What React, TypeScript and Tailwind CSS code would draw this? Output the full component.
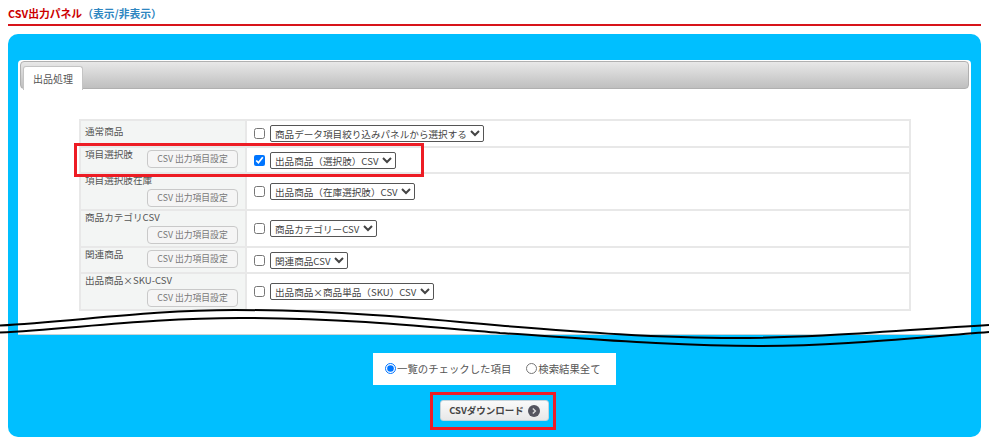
import React from 'react';

const rows = [
  { label: '通常商品', option: '商品データ項目絞り込みパネルから選択する', h: 'h-[27px]', noBtn: true },
  { label: '項目選択肢', option: '出品商品（選択肢）CSV', h: 'h-[26px]', checked: true },
  { label: '項目選択肢在庫', option: '出品商品（在庫選択肢）CSV', h: 'h-[37px]' },
  { label: '商品カテゴリCSV', option: '商品カテゴリーCSV', h: 'h-[37px]' },
  { label: '関連商品', option: '関連商品CSV', h: 'h-[26px]' },
  { label: '出品商品×SKU-CSV', option: '出品商品×商品単品（SKU）CSV', h: 'h-[37px]' },
];

export default function App() {
  return (
    <div className="relative w-[989px] h-[446px] overflow-hidden bg-white px-2 pt-[6px] text-[10px] text-[#555] font-['Noto_Sans_CJK_JP',sans-serif]">
      {/* heading */}
      <div className="h-[20px] border-b-2 border-[#d7141a] text-[10.8px] leading-[15px] font-bold text-[#cc0000]">
        CSV出力パネル<span className="text-[#2e86c1] [text-spacing-trim:space-all]">（表示/非表示）</span>
      </div>

      {/* blue panel */}
      <div className="mt-[8px] h-[403px] rounded-[10px] bg-[#00bfff] px-[10px] pt-[26px]">
        <div className="h-[275px] rounded-t-[4px] bg-white border-b border-[#c8d4d8] px-[2px] pt-[1px]">
          {/* tab bar */}
          <div className="h-[28px] rounded-[4px] border border-[#b0b0b0] bg-gradient-to-b from-[#e8e8e8] to-[#bfbfbf] pl-[2px] pt-[4px]">
            <div className="flex h-[24px] w-[60px] items-center justify-center rounded-t-[3px] border border-b-0 border-[#c4c4c4] bg-white text-[#555]">
              出品処理
            </div>
          </div>

          {/* csv table */}
          <table className="ml-[59px] mt-[30px] w-[832px] table-fixed border-collapse">
            <tbody>
              {rows.map((r) => (
                <tr key={r.label} className={r.h}>
                  <td className="w-[166px] border-2 border-[#e8e8e8] bg-[#f3f5f4] pl-[4px] pr-[7px] align-top">
                    <div className={`flex flex-wrap items-start justify-between text-[9.6px] leading-[13px] ${r.noBtn ? 'pt-[4px]' : ''}`}>
                      <span>{r.label}</span>
                      {!r.noBtn && (
                        <button className="ml-auto mt-[2px] h-[18px] w-[91px] rounded-[4px] border border-[#c9c9c9] bg-[#f5f5f5] pb-[1px] text-center text-[8.8px] leading-[14px] text-[#777]">
                          CSV 出力項目設定
                        </button>
                      )}
                    </div>
                  </td>
                  <td className="border-2 border-[#e8e8e8] pl-[7px]">
                    <div className="flex items-center gap-[5px]">
                      <input type="checkbox" defaultChecked={!!r.checked} className="h-[11px] w-[11px]" />
                      <select className="h-[17px] rounded-[2px] border border-[#555] bg-white text-[9.6px] leading-[14px] text-[#444]">
                        <option>{r.option}</option>
                      </select>
                    </div>
                  </td>
                </tr>
              ))}
            </tbody>
          </table>
        </div>

        {/* output scope */}
        <div className="ml-[355px] mt-[18px] flex h-[32px] w-[243px] items-center gap-[15px] bg-white pl-[12px] text-[10.4px]">
          <label className="flex items-center gap-[1px]">
            <input type="radio" name="scope" defaultChecked className="h-[11px] w-[11px]" />
            一覧のチェックした項目
          </label>
          <label className="flex items-center gap-[1px]">
            <input type="radio" name="scope" className="h-[11px] w-[11px]" />
            検索結果全て
          </label>
        </div>

        <div className="ml-[422px] mt-[15px]">
          <button className="flex h-[21px] w-[109px] items-center justify-center gap-[4px] rounded-[3px] border border-[#c4d4dc] bg-gradient-to-b from-[#fafafa] to-[#e8e8e8] text-[9.5px] font-bold text-[#444]">
            CSVダウンロード
            <span className="flex h-[12px] w-[12px] items-center justify-center rounded-full bg-[#55555f]">
              <svg viewBox="0 0 12 12" className="h-[12px] w-[12px]">
                <path d="M4.8 3.4 7.4 6 4.8 8.6" fill="none" stroke="#ddd" strokeWidth="1.4" />
              </svg>
            </span>
          </button>
        </div>
      </div>

      {/* highlight frames */}
      <div className="absolute left-[74px] top-[143px] h-[34px] w-[350px] border-[3px] border-[#ed1c24]" />
      <div className="absolute left-[430px] top-[392px] h-[38px] w-[126px] border-[3px] border-[#ed1c24]" />

      {/* cut lines */}
      <svg className="absolute left-0 top-0 h-[446px] w-[989px]" viewBox="0 0 989 446" fill="none">
        <path d="M0 325.5 C 70 322, 150 310, 235 310 C 330 310, 420 318, 500 325.5 C 580 332, 660 338, 735 338 C 820 338, 900 330, 989 325" stroke="#000" strokeWidth="2" />
        <path d="M0 332.5 C 70 329, 150 318, 240 318 C 340 318, 420 326, 500 333 C 580 338, 670 346, 760 346 C 840 346, 910 338, 989 332" stroke="#000" strokeWidth="2" />
      </svg>
    </div>
  );
}
